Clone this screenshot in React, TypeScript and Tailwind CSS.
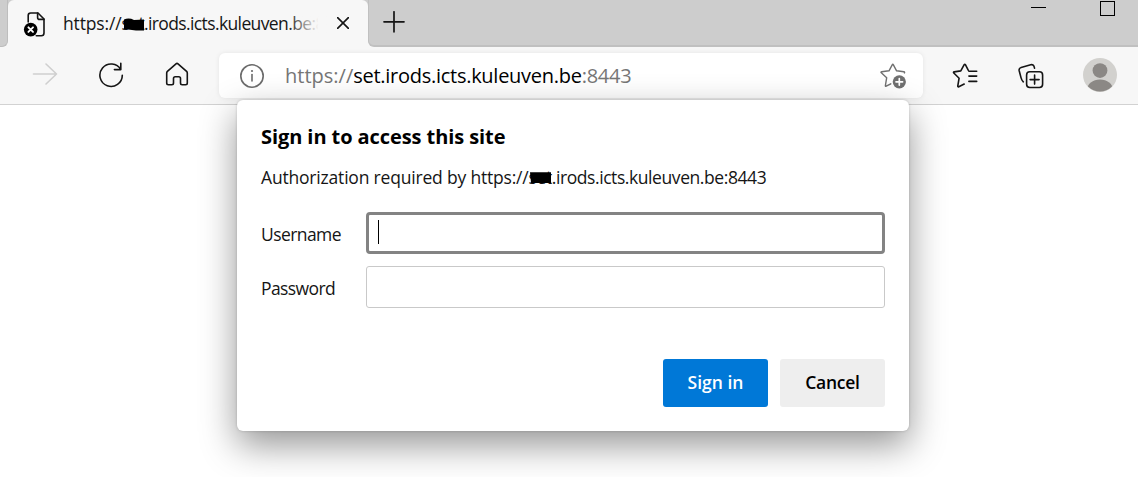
import React from 'react';

const svgProps = { fill: 'none', stroke: 'currentColor', strokeLinecap: 'round', strokeLinejoin: 'round' } as const;

function TabStrip() {
  return (
    <header className="flex h-[47px] bg-[#cdcdcd]">
      <div className="w-2 shrink-0 bg-[#f7f7f7]">
        <div className="h-full rounded-br-[6px] border-r border-b border-[#bdbdbd] bg-[#cdcdcd]" />
      </div>
      <div className="relative flex w-[360px] shrink-0 items-center rounded-t-md bg-[#f7f7f7]">
        <svg className="ml-[15px] h-[26px] w-[24px] shrink-0" viewBox="0 0 24 26" {...svgProps} strokeWidth="1.6">
          <path d="M5.2 11V4.5Q5.2 2 7.7 2H15l6 6v14q0 2.7-2.7 2.7h-5" />
          <path d="M14.6 2v4.4q0 2 2 2H21" />
          <circle cx="7.7" cy="18.6" r="6.8" fill="#000" stroke="none" />
          <path d="m5.4 16.3 4.6 4.6m0-4.6-4.6 4.6" stroke="#fff" strokeWidth="1.9" />
        </svg>
        <div className="relative ml-[16px] mb-[2px] w-[260px] whitespace-nowrap text-[17.5px] leading-6">
          <span className="tracking-[-0.15px]">https://</span><span className="tracking-[-0.62px]">set.irods.icts.kuleuven.be:8</span>
          <span className="absolute inset-y-0 -right-[6px] w-[42px] bg-linear-to-r from-[#f7f7f7]/0 to-[#f7f7f7] to-75%" />
          <svg className="absolute left-[60px] top-[7px] h-[13px] w-[22px]" viewBox="0 0 22 13">
            <path d="M1 1.5Q6-.5 11 2l10-.5v11H13L1 11Z" />
          </svg>
        </div>
        <svg className="ml-[14px] mb-[1px] h-[12px] w-[12px] shrink-0" viewBox="0 0 12 12" {...svgProps} strokeWidth="1.6">
          <path d="m.6.6 10.8 10.8m0-10.8L.6 11.4" />
        </svg>
      </div>
      <div className="flex grow bg-[#f7f7f7]">
        <div className="flex grow items-start justify-between rounded-bl-[6px] border-b-2 border-l border-[#c0c0c0] bg-[#cdcdcd]">
          <svg className="ml-[14px] mt-[11px] h-[22px] w-[22px]" viewBox="0 0 22 22" {...svgProps} strokeWidth="1.7">
            <path d="M1 10.8h20M11 .8v20" />
          </svg>
          <div className="mr-[23px] flex items-start">
            <span className="mt-[7px] h-px w-[15px] bg-black" />
            <span className="ml-[54px] mt-px h-[15px] w-[15px] border border-black" />
          </div>
        </div>
      </div>
    </header>
  );
}

function Toolbar() {
  return (
    <nav className="flex h-[58px] items-center border-b border-[#d2d2d2] bg-[#f7f7f7]">
      <svg className="ml-[32px] mb-[3px] h-[24px] w-[26px] shrink-0 text-[#cfcfcf]" viewBox="0 0 26 24" {...svgProps} strokeWidth="1.6">
        <path d="M1.5 12H24.5M14 2l10.5 10L14 22" />
      </svg>
      <svg className="ml-[40px] mb-px h-[26px] w-[26px] shrink-0" viewBox="0 0 26 26" {...svgProps} strokeWidth="1.6">
        <path d="M24.3 13.2A11.2 11.2 0 1 1 22.8 7.6M22.8 1.2v6.4h-6.4" />
      </svg>
      <svg className="ml-[41px] mb-[3px] h-[24px] w-[24px] shrink-0" viewBox="0 0 24 24" {...svgProps} strokeWidth="1.6">
        <path d="M1.7 11.1q0-1 .7-1.7L11 1.8q1-.9 2 0l8.6 7.6q.7.7.7 1.7v10q0 1.7-1.7 1.7h-3.4q-1.7 0-1.7-1.7v-4.6q0-1.7-1.7-1.7h-3.6q-1.7 0-1.7 1.7v4.6q0 1.7-1.7 1.7H3.4q-1.7 0-1.7-1.7z" />
      </svg>
      <div className="ml-[30px] flex h-[45px] w-[704px] shrink-0 items-center rounded-[6px] bg-white shadow-[0_0_5px_rgba(0,0,0,0.08)]">
        <svg className="ml-[20px] h-[26px] w-[26px] text-[#6b6b6b]" viewBox="0 0 26 26" {...svgProps} strokeWidth="1.6">
          <circle cx="13" cy="13" r="11.2" />
          <path d="M13 11.5v6.5" />
          <circle cx="13" cy="8" r="1.1" fill="currentColor" stroke="none" />
        </svg>
        <div className="ml-[20px] grow whitespace-nowrap text-[20px] leading-7 tracking-[-0.27px] text-[#767676]">
          <span className="tracking-normal">https://</span><span className="text-black">set.irods.icts.kuleuven.be</span><span>:8443</span>
        </div>
        <svg className="mr-[16px] mt-px h-[26px] w-[27px] text-[#707070]" viewBox="0 0 27 26" {...svgProps} strokeWidth="1.4">
          <path d="M10.8 20.8 6.2 23.2q-1 .5-.8-.7l1.3-7.8L1.3 9.8q-.8-.8.4-1l7.3-1 3.2-6q.6-1 1.2 0l3.2 6 7.3 1q1.1.2.5 1.1" />
          <circle cx="19.3" cy="18.8" r="6.6" fill="currentColor" stroke="none" />
          <path d="M19.3 15.5v6.6M16 18.8h6.6" stroke="#fff" strokeWidth="1.7" />
        </svg>
      </div>
      <svg className="ml-[29px] h-[26px] w-[27px] shrink-0" viewBox="0 0 27 26" {...svgProps} strokeWidth="1.6">
        <path d="M12.2 21 6.8 23.7q-1.2.5-1-.8l1.3-7.7L1.8 10q-.8-.9.4-1.1l6.6-1 3.4-6.2q.6-1 1.2 0l2.8 5.4M16.9 8.2h7.8M16.9 13.1h7.8M16.9 18.4h7.8" />
      </svg>
      <svg className="ml-[39px] h-[26px] w-[26px] shrink-0" viewBox="0 0 26 26" {...svgProps} strokeWidth="1.6">
        <path d="M5.3 18.8Q3.7 17.5 3 14.6L1.2 7.8Q.6 5.2 3.1 4.5l9.6-2.7q2.8-.7 3.5 2.1l.3 1.2" />
        <rect x="8.6" y="8.7" width="16" height="15.8" rx="3.2" />
        <path d="M16.6 12.1v9M12.1 16.6h9" />
      </svg>
      <svg className="ml-[39px] mb-px h-[34px] w-[34px] shrink-0" viewBox="0 0 34 34">
        <defs><clipPath id="avatar"><circle cx="17" cy="17" r="16.5" /></clipPath></defs>
        <circle cx="17" cy="17" r="17" fill="#d2d1ce" />
        <g clipPath="url(#avatar)" fill="#8b8885">
          <circle cx="17" cy="12.6" r="7.4" />
          <ellipse cx="17" cy="32" rx="13" ry="10.5" />
        </g>
      </svg>
    </nav>
  );
}

function SignInDialog() {
  return (
    <section className="absolute left-[237px] top-[100px] flex h-[331px] w-[672px] flex-col rounded-[6px] bg-white px-[24px] pb-[24px] shadow-[0_0_3px_rgba(0,0,0,0.18),0_14px_36px_rgba(0,0,0,0.42)]">
      <h1 className="mt-[23px] whitespace-nowrap text-[20px] font-bold leading-[28px] tracking-[-0.08px] text-black">Sign in to access this site</h1>
      <p className="relative mt-[14px] whitespace-nowrap text-[17.5px] leading-6 tracking-[-0.42px]">
        <span className="tracking-[-0.19px]">Authorization required by https://</span>
        <span className="relative">
          set
          <svg className="absolute left-[1px] top-[7px] h-[11px] w-[22px]" viewBox="0 0 22 11"><path d="M0 .3H21V11H1Z" /></svg>
        </span>
        <span>.irods.icts.kuleuven.be:8443</span>
      </p>
      <label className="mt-[23px] flex items-center justify-between text-[17.5px] tracking-[-0.58px]">
        <span className="mt-[3px]">Username</span>
        <span className="flex h-[42px] w-[519px] items-center rounded-[4px] border-3 border-[#838383] bg-white pl-[9px]">
          <span className="mb-[3px] h-[24px] w-px bg-black" />
        </span>
      </label>
      <label className="mt-[12px] flex items-center justify-between text-[17.5px] tracking-[-0.58px]">
        <span className="mt-[3px]">Password</span>
        <span className="h-[42px] w-[519px] rounded-[3px] border border-[#c9c9c9] bg-white" />
      </label>
      <div className="mt-auto flex justify-end gap-3 text-[17.5px] font-semibold">
        <button className="h-[48px] w-[105px] rounded-[3px] bg-[#0078d7] pb-px text-white">Sign in</button>
        <button className="h-[48px] w-[105px] rounded-[3px] bg-[#eeeeee] pb-px tracking-[-0.25px] text-black">Cancel</button>
      </div>
    </section>
  );
}

export default function App() {
  return (
    <main className="relative h-[477px] w-[1138px] overflow-hidden bg-white font-['Open_Sans','Noto_Sans',sans-serif] text-[#151515]">
      <TabStrip />
      <Toolbar />
      <SignInDialog />
    </main>
  );
}
